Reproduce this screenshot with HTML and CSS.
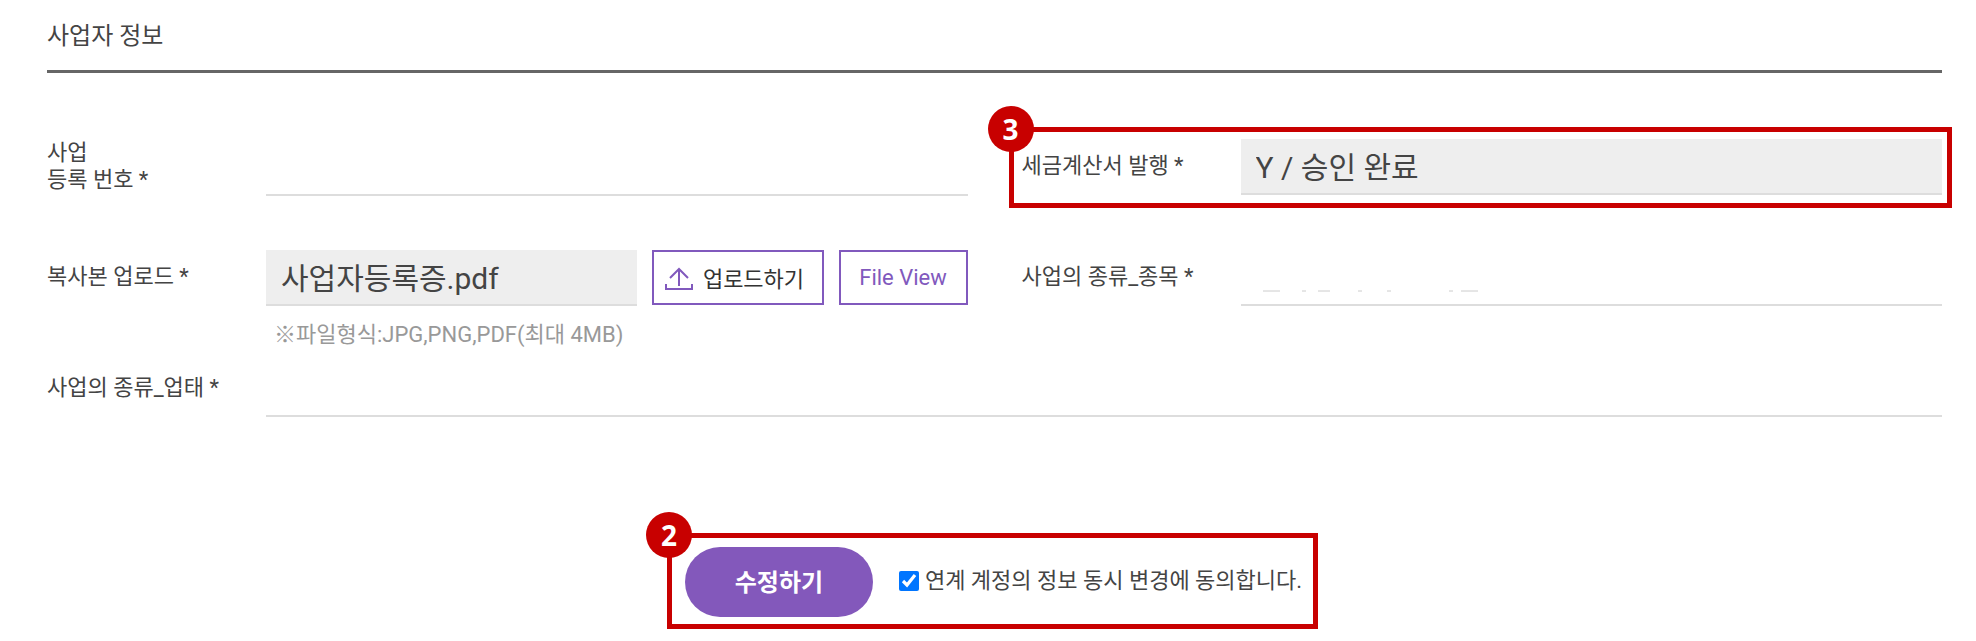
FILE: index.html
```html
<!DOCTYPE html>
<html lang="ko">
<head>
  <meta charset="UTF-8">
  <meta name="viewport" content="width=device-width, initial-scale=1.0">
  <title>사업자 정보</title>
  <link rel="stylesheet" href="styles.css">
</head>
<body>
  <form class="biz-form">
    <h2 class="title">사업자 정보</h2>

    <div class="form-grid">
      <!-- 사업자 등록 번호 -->
      <div class="field">
        <label class="label" for="bizNo">사업<br>등록 번호 *</label>
        <input class="input" type="text" id="bizNo">
      </div>

      <!-- 세금계산서 발행 -->
      <div class="field">
        <label class="label" for="taxBill">세금계산서 발행 *</label>
        <input class="input" type="text" id="taxBill" value="Y / 승인 완료" readonly>
        <div class="mark"><span class="badge">3</span></div>
      </div>

      <!-- 복사본 업로드 -->
      <div class="field">
        <label class="label" for="fileName">복사본 업로드 *</label>
        <div class="upload">
          <input class="input" type="text" id="fileName" value="사업자등록증.pdf" readonly>
          <button type="button" class="btn btn-upload">
            <svg class="icon" viewBox="0 0 28 24" aria-hidden="true">
              <path d="M14 19V2M5 11l9-9 9 9M1 17v5h26v-5"/>
            </svg>
            업로드하기
          </button>
          <button type="button" class="btn btn-view">File View</button>
        </div>
        <p class="hint">※파일형식:JPG,PNG,PDF(최대 4MB)</p>
      </div>

      <!-- 종목 -->
      <div class="field">
        <label class="label" for="bizItem">사업의 종류_종목 *</label>
        <input class="input" type="text" id="bizItem">
        <!-- 가려진 입력값 -->
        <svg class="masked" viewBox="0 0 216 2" aria-hidden="true">
          <path d="M0 1h17M39 1h4M55 1h12M95 1h4M124 1h4M186 1h4M198 1h17"/>
        </svg>
      </div>

      <!-- 업태 -->
      <div class="field wide">
        <label class="label" for="bizType">사업의 종류_업태 *</label>
        <input class="input" type="text" id="bizType">
      </div>
    </div>

    <div class="actions">
      <div class="action-box">
        <span class="badge">2</span>
        <button type="submit" class="btn-submit">수정하기</button>
        <label class="agree"><input type="checkbox" checked>연계 계정의 정보 동시 변경에 동의합니다.</label>
      </div>
    </div>
  </form>
</body>
</html>
```

FILE: styles.css
```css
* {
  box-sizing: border-box;
}

body {
  margin: 0;
  background-color: #fff;
  color: #444;
  font-family: Roboto, "Noto Sans CJK KR", sans-serif;
  font-size: 22px;
  line-height: 27px;
}

input,
button {
  font-family: inherit;
  color: inherit;
}

.biz-form {
  padding: 18px 34px 0 47px;
}

.title {
  margin: 0;
  padding-bottom: 16px;
  border-bottom: 3px solid #666;
  font-size: 24px;
  font-weight: normal;
  line-height: 36px;
}

/* 입력 영역 */
.form-grid {
  display: grid;
  grid-template-columns: 1fr 1fr;
  column-gap: 54px;
  row-gap: 55px;
  padding-top: 66px;
}

.field {
  position: relative;
  display: grid;
  grid-template-columns: 219px 1fr;
  align-items: center;
  height: 56px;
}

.wide {
  grid-column: 1 / -1;
}

.label {
  padding-bottom: 4px;
}

.input {
  width: 100%;
  min-width: 0;
  height: 56px;
  padding: 0 15px 2px;
  border: 0;
  border-bottom: 2px solid #ddd;
  border-radius: 0;
  background-color: #fff;
  font-size: 30px;
  outline: none;
}

.input:read-only {
  background-color: #eee;
}

/* 파일 업로드 */
.upload {
  display: flex;
  gap: 15px;
}

.upload .input {
  flex: 1;
}

.btn {
  display: flex;
  align-items: center;
  justify-content: center;
  height: 55px;
  padding: 0;
  border: 2px solid #8159bd;
  background-color: #fff;
  font-size: 22px;
  cursor: pointer;
}

.btn-upload {
  gap: 10px;
  width: 172px;
  padding: 0 6px 2px 0;
  color: #333;
}

.btn-view {
  width: 129px;
  color: #8159bd;
}

.icon {
  width: 28px;
  height: 24px;
  margin-top: 4px;
  fill: none;
  stroke: #8159bd;
  stroke-width: 2;
}

.hint {
  position: absolute;
  top: 100%;
  left: 227px;
  margin: 15px 0 0;
  color: #999;
}

.masked {
  position: absolute;
  bottom: 14px;
  left: 241px;
  width: 216px;
  height: 2px;
  stroke: #ccc;
  stroke-width: 1;
}

/* 강조 표시 */
.mark {
  position: absolute;
  top: -12px;
  right: -10px;
  bottom: -13px;
  left: -13px;
  border: 5px solid #c80000;
  pointer-events: none;
}

.badge {
  position: absolute;
  top: -26px;
  left: -26px;
  width: 46px;
  height: 46px;
  border-radius: 50%;
  background-color: #c80000;
  color: #fff;
  font-family: "Noto Sans", sans-serif;
  font-size: 28px;
  font-weight: bold;
  line-height: 46px;
  text-align: center;
}

/* 하단 버튼 */
.actions {
  display: flex;
  justify-content: center;
  padding: 116px 4px 0 0;
}

.action-box {
  position: relative;
  display: flex;
  align-items: center;
  gap: 26px;
  padding: 9px 11px 7px 13px;
  border: 5px solid #c80000;
}

.btn-submit {
  width: 188px;
  height: 70px;
  padding: 0 0 4px;
  border: 0;
  border-radius: 35px;
  background-color: #8358bb;
  color: #fff;
  font-size: 24px;
  font-weight: bold;
  cursor: pointer;
}

.agree {
  display: flex;
  align-items: center;
  gap: 6px;
  padding-bottom: 3px;
}

.agree input {
  width: 20px;
  height: 20px;
  margin: 0;
  accent-color: #0075ff;
}
```
